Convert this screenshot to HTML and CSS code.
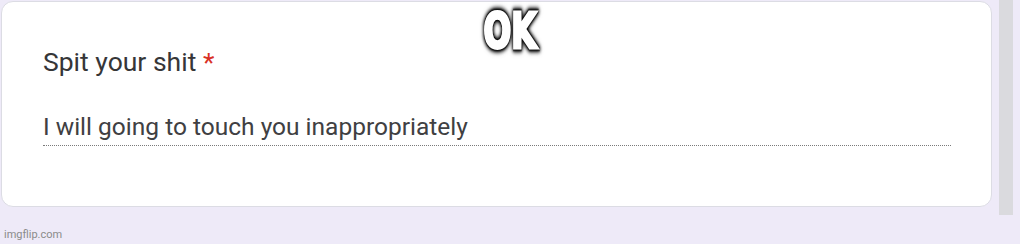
FILE: index.html
```html
<!DOCTYPE html>
<html>
<head>
<meta charset="utf-8">
<link rel="stylesheet" href="styles.css">
</head>
<body>
<div class="page">
  <div class="main">
    <div class="card">
      <div class="question">Spit your shit <span class="req">*</span></div>
      <div class="answer">I will going to touch you inappropriately</div>
    </div>
    <div class="footer">imgflip.com</div>
  </div>
  <div class="scrollbar"></div>
  <div class="caption">OK</div>
</div>
</body>
</html>
```
FILE: styles.css
```css
html, body {
  margin: 0;
  padding: 0;
  background: #eeeaf8;
}
.page {
  position: relative;
  width: 1020px;
  height: 244px;
  display: flex;
  font-family: Roboto, "Liberation Sans", sans-serif;
}
.main {
  width: 994px;
  padding: 1px 0 0 1px;
  box-sizing: border-box;
  display: flex;
  flex-direction: column;
}
.card {
  width: 991px;
  height: 206px;
  box-sizing: border-box;
  background: #fff;
  border: 1px solid #dcdce4;
  border-radius: 12px;
  padding: 44px 41px 0 41px;
}
.question {
  font-size: 26.5px;
  color: #363638;
  line-height: 32px;
}
.req {
  color: #d93025;
}
.answer {
  margin-top: 34px;
  width: 908px;
  font-size: 24.5px;
  color: #404042;
  line-height: 30px;
  padding-bottom: 3px;
  border-bottom: 1px dotted #7a7a7a;
}
.footer {
  margin-top: 21px;
  margin-left: 3px;
  font-size: 11px;
  color: #8a8a8a;
}
.scrollbar {
  margin-left: 5px;
  width: 14px;
  height: 215px;
  background: #dadade;
}
.caption {
  position: absolute;
  left: 0;
  right: 0;
  top: 5px;
  text-align: center;
  font-family: "Liberation Sans Narrow", "DejaVu Sans Condensed", sans-serif;
  font-weight: bold;
  font-size: 49px;
  line-height: 54px;
  color: #fff;
  -webkit-text-stroke: 3px #fff;
  transform: scaleX(0.74);
  filter: drop-shadow(0 0 1px #000) drop-shadow(0 0 1px #000) drop-shadow(0 0 2px #000) drop-shadow(0 0 2px rgba(0,0,0,0.8));
}
```
